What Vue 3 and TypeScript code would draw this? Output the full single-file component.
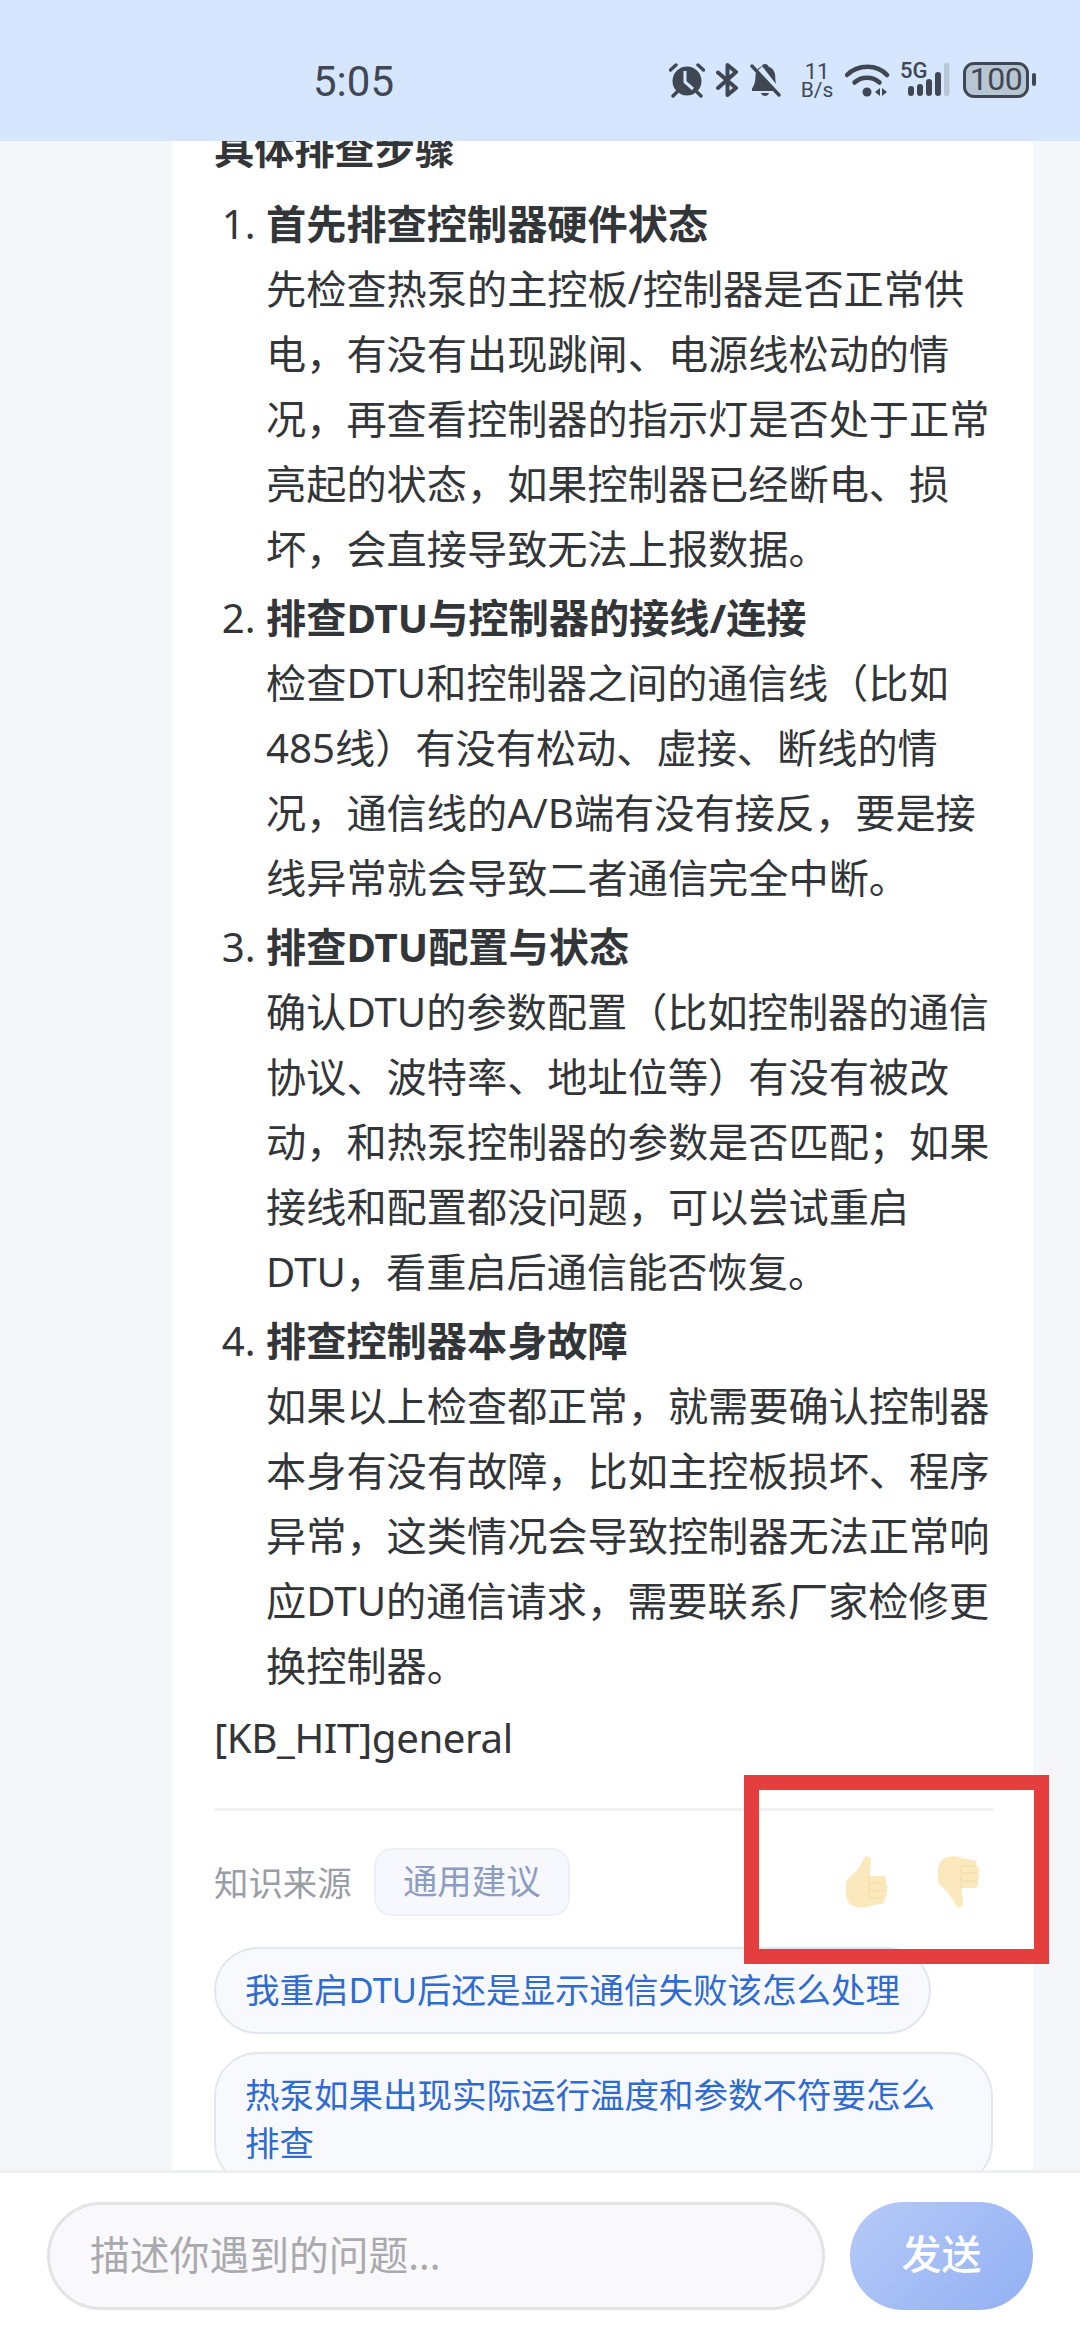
<script setup lang="ts">
interface Step {
  title: string;
  body: string;
}

const steps: Step[] = [
  {
    title: "首先排查控制器硬件状态",
    body: "先检查热泵的主控板/控制器是否正常供电，有没有出现跳闸、电源线松动的情况，再查看控制器的指示灯是否处于正常亮起的状态，如果控制器已经断电、损坏，会直接导致无法上报数据。",
  },
  {
    title: "排查DTU与控制器的接线/连接",
    body: "检查DTU和控制器之间的通信线（比如485线）有没有松动、虚接、断线的情况，通信线的A/B端有没有接反，要是接线异常就会导致二者通信完全中断。",
  },
  {
    title: "排查DTU配置与状态",
    body: "确认DTU的参数配置（比如控制器的通信协议、波特率、地址位等）有没有被改动，和热泵控制器的参数是否匹配；如果接线和配置都没问题，可以尝试重启DTU，看重启后通信能否恢复。",
  },
  {
    title: "排查控制器本身故障",
    body: "如果以上检查都正常，就需要确认控制器本身有没有故障，比如主控板损坏、程序异常，这类情况会导致控制器无法正常响应DTU的通信请求，需要联系厂家检修更换控制器。",
  },
];

const suggestions: string[] = [
  "我重启DTU后还是显示通信失败该怎么处理",
  "热泵如果出现实际运行温度和参数不符要怎么排查",
];
</script>

<template>
  <div class="page">
    <header class="status">
      <span class="time">5:05</span>
      <div class="status-icons">
        <svg class="ic-alarm" width="36" height="35" viewBox="0 0 36 35">
          <circle cx="18" cy="18" r="14.5" fill="#3f4852" />
          <path d="M16 8v11l8 7" fill="none" stroke="#d6e6fe" stroke-width="3" />
          <path d="M1.5 7 7 2M34.5 7 29 2M4 33l4-4M32 33l-4-4" fill="none" stroke="#3f4852" stroke-width="3.4" stroke-linecap="round" />
        </svg>
        <svg class="ic-bt" width="22" height="34" viewBox="0 0 22 34">
          <path d="M2 9.500 20 25l-8.500 7V2L20 9 2 25" fill="none" stroke="#3f4852" stroke-width="4" stroke-linejoin="round" stroke-linecap="round" />
        </svg>
        <svg class="ic-bell" width="31" height="34" viewBox="0 0 31 34">
          <path d="M15 1c-1.500 0-3 1-3.500 2.500C7.500 5 5.500 9 5.500 13c0 6-1.500 10-3.500 12.500V28h22L6 9M12 3l14 18c-.5-3-.8-5-.8-8 0-4-2.500-8-6.700-9.500C18 2 17 1 15 1Z" fill="#3f4852" />
          <path d="M2 3l27 29" fill="none" stroke="#3f4852" stroke-width="3.400" stroke-linecap="round" />
          <path d="M11 30h8c-.5 2-2 3-4 3s-3.500-1-4-3Z" fill="#3f4852" />
        </svg>
        <div class="speed">
          <span class="speed-num">11</span>
          <span>B/s</span>
        </div>
        <svg class="ic-wifi" width="45" height="34" viewBox="0 0 45 34">
          <path d="M2 12C13 1 32 1 42 12" fill="none" stroke="#3f4852" stroke-width="4.500" stroke-linecap="round" />
          <path d="M9.500 19.500c7-6.500 18-6.500 25 0" fill="none" stroke="#3f4852" stroke-width="4.500" stroke-linecap="round" />
          <circle cx="22" cy="29" r="4.500" fill="#3f4852" />
          <path d="M35 25v8l-5-4ZM37 25v8l5-4Z" fill="#3f4852" />
        </svg>
        <div class="signal">
          <span class="net">5G</span>
          <svg width="44" height="34" viewBox="0 0 44 34">
            <rect x="0" y="23" width="6" height="10" rx="3" fill="#3f4852" />
            <rect x="9" y="21" width="6" height="12" rx="3" fill="#3f4852" />
            <rect x="18" y="16" width="6" height="17" rx="3" fill="#3f4852" />
            <rect x="27" y="9" width="6" height="24" rx="3" fill="#3f4852" />
            <rect x="36" y="0" width="5.500" height="33" rx="2" fill="#b9c7d8" />
          </svg>
        </div>
        <div class="battery">100</div>
      </div>
    </header>

    <main class="scroll">
      <article class="card">
        <p class="heading">具体排查步骤</p>
        <ol class="steps">
          <li v-for="step in steps" :key="step.title">
            <strong>{{ step.title }}</strong><br />{{ step.body }}
          </li>
        </ol>
        <p class="kb">[KB_HIT]general</p>

        <div class="meta">
          <span class="meta-label">知识来源</span>
          <span class="tag">通用建议</span>
          <div class="thumbs">
            <button class="thumb" type="button">
              <svg width="44" height="52" viewBox="0 0 44 52">
                <path class="hand" d="M19 2C21-.5 26 0 26 5c0 6-2 11-1 15h13c4 0 4 6 2 7 3 1 3 7 1 8 2 2 1 7-2 7 2 2 0 6-3 6l-12 2c-6 3-16 2-20-3-4-4-4-17-2-23C8 19 15 12 19 2Z" />
                <path class="fold" d="M25 20c-2 2-2 5 0 7h15M25 27c-2 3-2 6 0 8h16M25 35c-2 3-2 5 0 7h14" />
              </svg>
            </button>
            <button class="thumb" type="button">
              <svg width="44" height="52" viewBox="0 0 44 52">
                <g transform="matrix(1 0 0 -1 0 52)">
                  <path class="hand" d="M19 2C21-.5 26 0 26 5c0 6-2 11-1 15h13c4 0 4 6 2 7 3 1 3 7 1 8 2 2 1 7-2 7 2 2 0 6-3 6l-12 2c-6 3-16 2-20-3-4-4-4-17-2-23C8 19 15 12 19 2Z" />
                  <path class="fold" d="M25 20c-2 2-2 5 0 7h15M25 27c-2 3-2 6 0 8h16M25 35c-2 3-2 5 0 7h14" />
                </g>
              </svg>
            </button>
          </div>
        </div>

        <div class="chips">
          <button v-for="text in suggestions" :key="text" class="chip" type="button">{{ text }}</button>
        </div>
      </article>
    </main>

    <footer class="composer">
      <div class="input">描述你遇到的问题...</div>
      <button class="send" type="button">发送</button>
    </footer>

    <!-- red annotation drawn on top of the screenshot -->
    <div class="mark"></div>
  </div>
</template>

<style scoped>
.page {
  position: relative;
  display: flex;
  flex-direction: column;
  width: 1080px;
  height: 2340px;
  overflow: hidden;
  background: #f5f6fa;
  color: #333639;
  font-family: "Noto Sans", "Noto Sans CJK SC", sans-serif;
  font-size: 40.2px;
}

.status {
  flex: none;
  z-index: 1;
  display: flex;
  align-items: flex-start;
  height: 141px;
  padding: 60px 51px 0 313px;
  box-sizing: border-box;
  background: #d6e6fe;
  color: #3f4852;
  font-family: Roboto, sans-serif;
}
.time {
  font-size: 42px;
  line-height: 42px;
  margin-top: 1px;
}
.status-icons {
  display: flex;
  align-items: flex-start;
  margin-left: auto;
}
.ic-alarm {
  margin-top: 3px;
}
.ic-bt {
  margin: 3px 0 0 11px;
}
.ic-bell {
  margin: 3px 0 0 12px;
}
.speed {
  display: flex;
  flex-direction: column;
  align-items: center;
  margin: 2px 0 0 18px;
  width: 36px;
  font-size: 21px;
  line-height: 19px;
}
.speed-num {
  font-size: 22px;
}
.ic-wifi {
  margin: 3px 0 0 10px;
}
.signal {
  position: relative;
  width: 50px;
  height: 34px;
  margin: 3px 0 0 10px;
}
.signal svg {
  position: absolute;
  left: 8px;
  top: 0;
}
.net {
  position: absolute;
  left: 0;
  top: -2px;
  font-size: 22px;
  line-height: 20px;
  font-weight: 500;
}
.battery {
  position: relative;
  width: 66px;
  height: 36px;
  margin: 2px 0 0 13px;
  box-sizing: border-box;
  border: 3.5px solid #3f4852;
  border-radius: 11px;
  background: #b8c5d3;
  font-size: 32px;
  line-height: 29px;
  text-align: center;
  letter-spacing: -0.5px;
}
.battery::after {
  content: "";
  position: absolute;
  right: -10px;
  top: 8px;
  width: 4px;
  height: 13px;
  border-radius: 2px;
  background: #3f4852;
}

.scroll {
  flex: 1;
  min-height: 0;
  overflow: hidden;
  padding: 0 47px 0 172px;
}
.card {
  /* the message is scrolled, its top is above the fold */
  margin-top: -25px;
  padding: 0 40px 0 42px;
  background: #fff;
}
.heading {
  margin: 0;
  font-weight: 700;
  line-height: 65px;
}
.steps {
  margin: 10px 0 0;
  padding: 0 0 0 52px;
}
.steps li {
  line-height: 65px;
  margin-bottom: 4px;
}
.steps strong {
  font-weight: 700;
}
.kb {
  margin: 7px 0 0;
  line-height: 65px;
  letter-spacing: -0.4px;
}

.meta {
  display: flex;
  align-items: center;
  margin-top: 38px;
  padding-top: 37px;
  border-top: 3px solid #f0f1f4;
}
.meta-label {
  padding-bottom: 3px;
  font-size: 34.4px;
  color: #9a9ea6;
}
.tag {
  margin-left: 22.4px;
  padding: 0 27px;
  height: 68px;
  line-height: 61px;
  box-sizing: border-box;
  border: 2px solid #eef0f6;
  border-radius: 18px;
  background: #f7f8fd;
  color: #8c9dc2;
  font-size: 34.4px;
}
.thumbs {
  display: flex;
  gap: 24px;
  margin-left: auto;
}
.thumb {
  display: flex;
  justify-content: center;
  align-items: center;
  width: 68px;
  height: 68px;
  padding: 0;
  border: 0;
  background: none;
}
.hand {
  fill: #fbe8bd;
}
.fold {
  fill: none;
  stroke: #f4dfb0;
  stroke-width: 1.500;
}

.chips {
  display: flex;
  flex-direction: column;
  align-items: flex-start;
  gap: 18px;
  margin-top: 31px;
}
.chip {
  padding: 16.5px 29px 18.5px;
  border: 2.500px solid #e4e6ee;
  border-radius: 44px;
  background: #f8f9fd;
  color: #2f6bd0;
  font-family: inherit;
  font-size: 34.5px;
  line-height: 48px;
  text-align: left;
}

.composer {
  flex: none;
  z-index: 1;
  display: flex;
  gap: 25px;
  height: 170px;
  padding: 29px 47px 0;
  box-sizing: border-box;
  border-top: 3px solid #eeeff2;
  background: #fff;
}
.input {
  flex: 1;
  height: 108px;
  padding-left: 40px;
  box-sizing: border-box;
  border: 3px solid #e4e4e7;
  border-radius: 54px;
  background: #f9f9fb;
  color: #a9a9ae;
  font-size: 39.8px;
  line-height: 100px;
}
.send {
  flex: none;
  width: 183px;
  height: 108px;
  padding: 0 0 9px;
  border: 0;
  border-radius: 54px;
  background: linear-gradient(135deg, #b6caf7, #92b0f3);
  color: #fff;
  font-family: inherit;
  font-size: 40px;
  font-weight: 500;
}

.mark {
  position: absolute;
  z-index: 2;
  left: 744px;
  top: 1775px;
  width: 305px;
  height: 189px;
  box-sizing: border-box;
  border: 15px solid #e53e3e;
}
</style>
